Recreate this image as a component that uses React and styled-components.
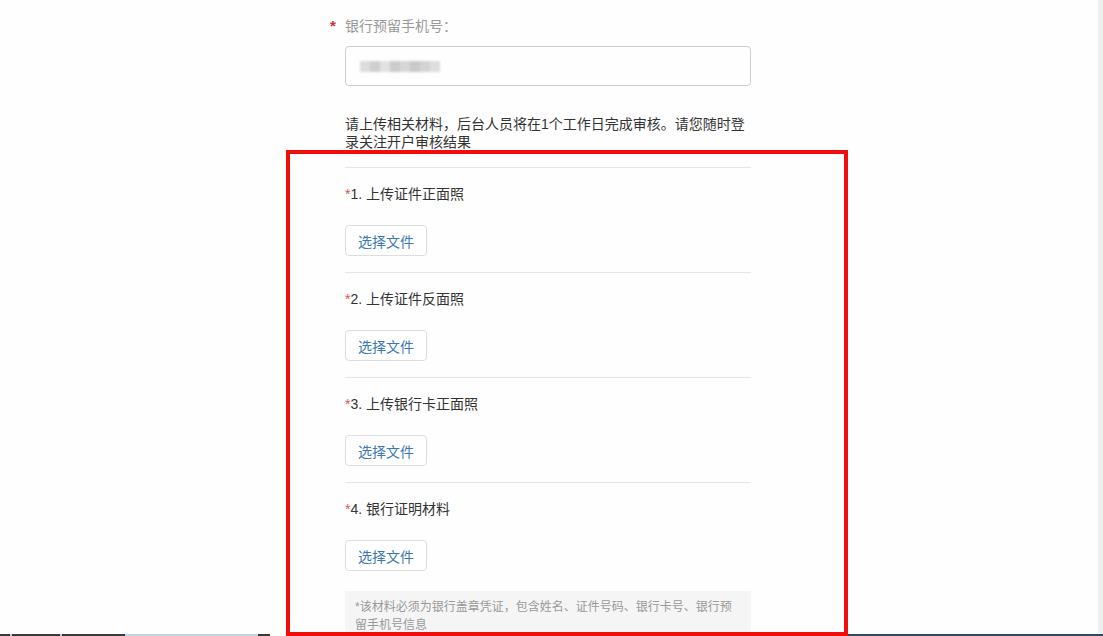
import styled, { createGlobalStyle } from "styled-components";

const GlobalStyle = createGlobalStyle`
  html, body {
    margin: 0;
    padding: 0;
    background: #fff;
  }
  body {
    font-family: "Liberation Sans", "Noto Sans CJK SC", sans-serif;
    font-size: 14px;
    color: #333;
  }
`

const Page = styled.div`
  position: relative;
  height: 636px;
  display: flex;
  flex-direction: column;
  overflow: hidden;
`

const Body = styled.div`
  flex: 1;
  min-height: 0;
  display: flex;
`

const Main = styled.div`
  flex: 1;
  overflow: hidden;
  background: #fefefe;
`

const Scrollbar = styled.div`
  width: 5px;
  background: #efefef;
`

const BottomEdge = styled.div`
  height: 2px;
  background: linear-gradient(to right, #3a3a3a 0 10px, #b4c6d6 10px 12px, #3a3a3a 12px 60px, #b4c6d6 60px 62px, #3a3a3a 62px 125px, #c2d2e0 125px 258px, #3a3a3a 258px 270px, #fff 270px 848px, #2b4866 848px);
`

const Column = styled.div`
  width: 406px;
  margin-left: 345px;
  padding-top: 16px;
`

const FieldLabel = styled.div`
  display: flex;
  align-items: center;
  margin-left: -15px;
  line-height: 20px;
  color: #999;
`

const LabelStar = styled.span`
  width: 15px;
  color: #c9302c;
  font-size: 15px;
  font-weight: bold;
`

const InputBox = styled.div`
  margin-top: 10px;
  height: 40px;
  box-sizing: border-box;
  border: 1px solid #ccc;
  border-radius: 4px;
  display: flex;
  align-items: center;
  padding-left: 14px;
`

const Mosaic = styled.div`
  display: flex;
  filter: blur(0.8px);
`

const Tile = styled.span`
  width: 10px;
  height: 11px;
  background: ${p => p.$shade};
`

const Notice = styled.p`
  margin: 29px 0 16px;
  line-height: 18px;
  color: #333;
`

const Section = styled.div`
  border-top: 1px solid #e5e5e5;
  padding: 16px 0 16px;
`

const SectionTitle = styled.div`
  line-height: 20px;
  color: #333;
`

const TitleStar = styled.span`
  color: #d9534f;
`

const FileButton = styled.button`
  display: block;
  margin-top: 21px;
  height: 31px;
  padding: 0 12px;
  border: 1px solid #ddd;
  border-radius: 4px;
  background: #fff;
  font-family: inherit;
  font-size: 14px;
  color: #3a79b1;
  cursor: pointer;
`

const Note = styled.div`
  margin-top: 4px;
  padding: 7px 10px 10px;
  background: #f5f5f5;
  color: #999;
  font-size: 12px;
  line-height: 18px;
`

const Highlight = styled.div`
  position: absolute;
  left: 286px;
  top: 150px;
  width: 562px;
  height: 486px;
  box-sizing: border-box;
  border: 4px solid #f20d0d;
  pointer-events: none;
`

const uploads = [
  "1. 上传证件正面照",
  "2. 上传证件反面照",
  "3. 上传银行卡正面照",
  "4. 银行证明材料",
];

const shades = ["#dcdcdc", "#cfcfcf", "#e2e2e2", "#cccccc", "#d6d6d6", "#c9c9c9", "#d3d3d3", "#dedede"];

function App() {
  return (
    <Page>
      <GlobalStyle />
      <Body>
        <Main>
          <Column>
            <FieldLabel>
              <LabelStar>*</LabelStar>
              银行预留手机号：
            </FieldLabel>
            <InputBox>
              <Mosaic>
                {shades.map((s, i) => <Tile key={i} $shade={s} />)}
              </Mosaic>
            </InputBox>
            <Notice>请上传相关材料，后台人员将在1个工作日完成审核。请您随时登录关注开户审核结果</Notice>
            {uploads.map(title => (
              <Section key={title}>
                <SectionTitle><TitleStar>*</TitleStar>{title}</SectionTitle>
                <FileButton>选择文件</FileButton>
              </Section>
            ))}
            <Note>*该材料必须为银行盖章凭证，包含姓名、证件号码、银行卡号、银行预留手机号信息</Note>
          </Column>
        </Main>
        <Scrollbar />
      </Body>
      <BottomEdge />
      <Highlight />
    </Page>
  );
}

export default App;
